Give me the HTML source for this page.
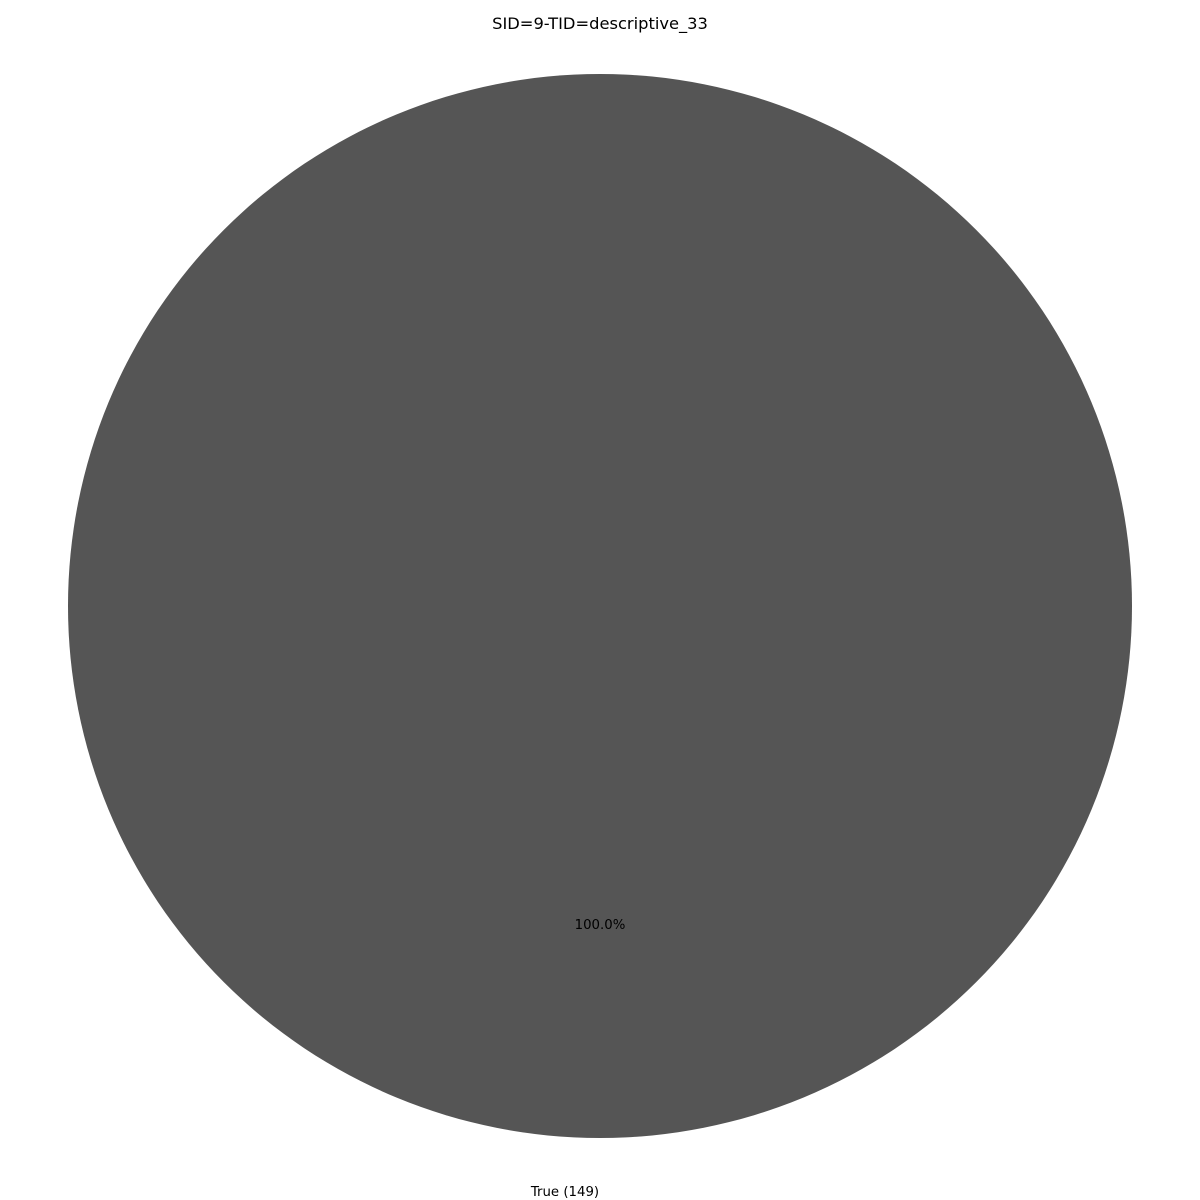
<!DOCTYPE html>
<html><head><meta charset="utf-8"><style>
html,body{margin:0;padding:0;background:#fff;width:1200px;height:1200px;overflow:hidden}
</style></head><body>
<svg width="1200" height="1200" xmlns="http://www.w3.org/2000/svg">
<rect width="1200" height="1200" fill="#fff"/>
<text x="600" y="29" font-family="DejaVu Sans, Liberation Sans, sans-serif" font-size="16.3" text-anchor="middle" fill="#000">SID=9-TID=descriptive_33</text>
<ellipse cx="600" cy="606" rx="532" ry="532" fill="#555555"/>
<text x="600" y="929" font-family="DejaVu Sans, Liberation Sans, sans-serif" font-size="13.3" text-anchor="middle" fill="#000">100.0%</text>
<text x="565" y="1196" font-family="DejaVu Sans, Liberation Sans, sans-serif" font-size="13.3" text-anchor="middle" fill="#000">True (149)</text>
</svg>
</body></html>
